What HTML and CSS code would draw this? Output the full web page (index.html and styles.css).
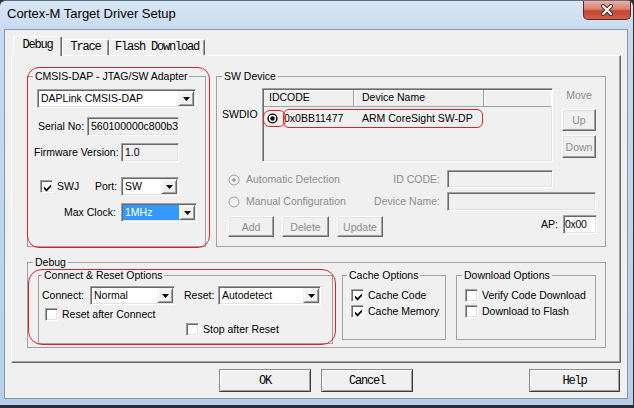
FILE: index.html
```html
<!DOCTYPE html>
<html>
<head>
<meta charset="utf-8">
<link rel="stylesheet" href="styles.css">
</head>
<body>
<div class="window">
  <div class="titlebar">
    <span class="title">Cortex-M Target Driver Setup</span>
    <div class="close">
      <svg width="14" height="12" viewBox="0 0 14 12"><path d="M3 2 L11 10 M11 2 L3 10" stroke="#4a2a2a" stroke-width="4" stroke-linecap="round"/><path d="M3 2 L11 10 M11 2 L3 10" stroke="#fff" stroke-width="2.2" stroke-linecap="round"/></svg>
    </div>
  </div>
  <div class="client">
    <div class="tabs">
      <div class="tab active w-debug">Debug</div>
      <div class="tab w-trace">Trace</div>
      <div class="tab w-flash">Flash Download</div>
    </div>
    <div class="panel">
      <div class="toprow">
        <fieldset class="group g-adapter">
          <legend>CMSIS-DAP - JTAG/SW Adapter</legend>
          <div class="combo c-dap"><span class="val">DAPLink CMSIS-DAP</span><span class="dbtn"><svg width="7" height="4" viewBox="0 0 7 4"><path d="M0 0H7L3.5 4Z" fill="#000"/></svg></span></div>
          <div class="row r-serial">
            <span class="lbl l-serial">Serial No:</span>
            <span class="edit ro e-serial">560100000c800b3</span>
          </div>
          <div class="row r-fw">
            <span class="lbl l-fw">Firmware Version:</span>
            <span class="edit ro e-fw">1.0</span>
          </div>
          <div class="row r-swj">
            <span class="chk c-swj"><svg width="9" height="9" viewBox="0 0 9 9"><path d="M1 3.5 L3.5 6 L8 1.5 V4 L3.5 8.5 L1 6 Z" fill="#000"/></svg></span>
            <span class="lbl l-swj">SWJ</span>
            <span class="lbl l-port">Port:</span>
            <div class="combo c-port"><span class="val">SW</span><span class="dbtn"><svg width="7" height="4" viewBox="0 0 7 4"><path d="M0 0H7L3.5 4Z" fill="#000"/></svg></span></div>
          </div>
          <div class="row r-clk">
            <span class="lbl l-clk">Max Clock:</span>
            <div class="combo c-clk"><span class="val sel">1MHz</span><span class="dbtn"><svg width="7" height="4" viewBox="0 0 7 4"><path d="M0 0H7L3.5 4Z" fill="#000"/></svg></span></div>
          </div>
        </fieldset>
        <fieldset class="group g-sw">
          <legend>SW Device</legend>
          <div class="row r-list">
            <span class="lbl l-swdio">SWDIO</span>
            <div class="list">
              <div class="lhead">
                <span class="col col1">IDCODE</span>
                <span class="col col2">Device Name</span>
                <span class="col col3"></span>
              </div>
              <div class="lrow">
                <span class="col col1"><svg class="rdot" width="11" height="11" viewBox="0 0 11 11"><circle cx="5.5" cy="5.5" r="4.4" fill="#fff" stroke="#000" stroke-width="1.4"/><circle cx="5.5" cy="5.5" r="2.2" fill="#000"/></svg>0x0BB11477</span>
                <span class="col col2">ARM CoreSight SW-DP</span>
              </div>
            </div>
            <div class="movecol">
              <span class="dis mv">Move</span>
              <span class="btn3d dis b-up">Up</span>
              <span class="btn3d dis b-down">Down</span>
            </div>
          </div>
          <div class="optgrid">
            <span class="radio dis"><svg width="12" height="12" viewBox="0 0 12 12"><circle cx="6" cy="6" r="5" fill="#f0f0f0" stroke="#a0a0a0"/><circle cx="6" cy="6" r="1.8" fill="#9a9a9a"/></svg>Automatic Detection</span>
            <span class="lbl dis rlbl">ID CODE:</span>
            <span class="edit ro e-id"></span>
            <span class="radio dis"><svg width="12" height="12" viewBox="0 0 12 12"><circle cx="6" cy="6" r="5" fill="#f0f0f0" stroke="#a0a0a0"/></svg>Manual Configuration</span>
            <span class="lbl dis rlbl">Device Name:</span>
            <span class="edit ro e-dev"></span>
          </div>
          <div class="row r-btns">
            <span class="btn3d dis b-add">Add</span>
            <span class="btn3d dis b-del">Delete</span>
            <span class="btn3d dis b-upd">Update</span>
            <span class="ap"><span class="lbl">AP:</span><span class="edit e-ap">0x00</span></span>
          </div>
        </fieldset>
      </div>
      <fieldset class="group g-debug">
        <legend>Debug</legend>
        <div class="subrow">
          <fieldset class="group g-cr">
            <legend>Connect &amp; Reset Options</legend>
            <div class="row r-conn">
              <span class="lbl l-conn">Connect:</span>
              <div class="combo c-conn"><span class="val">Normal</span><span class="dbtn"><svg width="7" height="4" viewBox="0 0 7 4"><path d="M0 0H7L3.5 4Z" fill="#000"/></svg></span></div>
              <span class="lbl l-reset">Reset:</span>
              <div class="combo c-reset"><span class="val">Autodetect</span><span class="dbtn"><svg width="7" height="4" viewBox="0 0 7 4"><path d="M0 0H7L3.5 4Z" fill="#000"/></svg></span></div>
            </div>
            <div class="row r-rac"><span class="chk"></span><span class="lbl ctext">Reset after Connect</span></div>
            <div class="row r-sar"><span class="chk"></span><span class="lbl ctext">Stop after Reset</span></div>
          </fieldset>
          <fieldset class="group g-cache">
            <legend>Cache Options</legend>
            <div class="row r-c1"><span class="chk"><svg width="9" height="9" viewBox="0 0 9 9"><path d="M1 3.5 L3.5 6 L8 1.5 V4 L3.5 8.5 L1 6 Z" fill="#000"/></svg></span><span class="lbl ctext">Cache Code</span></div>
            <div class="row r-c2"><span class="chk"><svg width="9" height="9" viewBox="0 0 9 9"><path d="M1 3.5 L3.5 6 L8 1.5 V4 L3.5 8.5 L1 6 Z" fill="#000"/></svg></span><span class="lbl ctext">Cache Memory</span></div>
          </fieldset>
          <fieldset class="group g-dl">
            <legend>Download Options</legend>
            <div class="row r-c1"><span class="chk"></span><span class="lbl ctext">Verify Code Download</span></div>
            <div class="row r-c2"><span class="chk"></span><span class="lbl ctext">Download to Flash</span></div>
          </fieldset>
        </div>
      </fieldset>
    </div>
    <div class="bottom">
      <span class="pbtn b-ok">OK</span>
      <span class="pbtn b-cancel">Cancel</span>
      <span class="pbtn b-help">Help</span>
    </div>
  </div>
  <div class="mark m-adapter"></div>
  <div class="mark m-cr"></div>
  <div class="mark m-radio"></div>
  <div class="mark m-row"></div>
</div>
</body>
</html>
```

FILE: styles.css
```css
* { box-sizing: border-box; }
html, body { margin: 0; padding: 0; }
body {
  width: 634px; height: 408px; overflow: hidden;
  background: #2b3036;
  font-family: "Liberation Sans", Arial, sans-serif;
  font-size: 10.5px; color: #000;
}
.window {
  position: relative;
  width: 633px; height: 405px;
  padding: 0 5px 6px 4px;
  background: linear-gradient(#d9e6f4 0, #c8dbf0 28px, #b7cfeb 100%);
  border-radius: 6px 6px 0 0;
  border-top: 1px solid #5d6e80;
  display: flex; flex-direction: column;
}
.titlebar {
  height: 28px;
  display: flex; justify-content: space-between; align-items: flex-start;
}
.title { font-size: 13px; line-height: 16px; margin: 5px 0 0 3px; color: #000; }
.close {
  width: 48px; height: 19px; margin-right: -3px;
  border: 1px solid #5a2a24; border-top: none;
  border-radius: 0 0 5px 5px;
  background: linear-gradient(#eab0a4 0, #d9806f 45%, #c64630 55%, #cf5e46 100%);
  display: flex; align-items: center; justify-content: center;
}
.client {
  width: 624px; height: 370px;
  background: #f0f0f0;
  border: 1px solid #8497ab;
  display: flex; flex-direction: column;
}
.tabs {
  display: flex; align-items: flex-end;
  height: 20px; margin: 6px 0 0 8px;
  position: relative; z-index: 1;
}
.tab {
  font-family: "Liberation Mono", monospace; font-size: 12px; letter-spacing: -1.2px;
  height: 16px; margin-bottom: 1px; line-height: 14px;
  text-align: center; background: #f0f0f0;
  border-top: 1px solid #fff; border-left: 1px solid #fff; border-right: 1px solid #696969;
  box-shadow: inset -1px 0 0 #a0a0a0;
  border-radius: 2px 2px 0 0;
}
.tab.active { height: 20px; margin-bottom: 0; line-height: 16px; }
.w-debug { width: 49px; }
.w-trace { width: 47px; }
.w-flash { width: 96px; }
.panel {
  margin: -1px 0 0 6px;
  width: 610px; height: 308px;
  border: 1px solid; border-color: #fff #696969 #696969 #fff;
  box-shadow: inset -1px -1px 0 #a0a0a0;
  padding: 14px 0 0 15px;
}
.toprow { display: flex; gap: 10px; }
.group { margin: 0; padding: 0; border: 1px solid #a0a0a0; min-width: 0; }
legend { padding: 0 2px; margin-left: 5px; line-height: 13px; height: 13px; }
.g-adapter { width: 179px; height: 177px; }
.g-sw { width: 390px; height: 177px; }
.row { display: flex; align-items: center; }
.lbl { white-space: nowrap; line-height: 13px; }
.dis { color: #8d8d8d; }

.combo {
  height: 19px; background: #fff;
  border: 1px solid; border-color: #a0a0a0 #fff #fff #a0a0a0;
  box-shadow: inset 1px 1px 0 #696969, inset -1px -1px 0 #e3e3e3;
  padding: 1px; display: flex;
}
.combo .val { flex: 1; padding-left: 2px; line-height: 15px; white-space: nowrap; overflow: hidden; }
.combo .val.sel { background: #3399ff; color: #fff; }
.dbtn {
  width: 16px; height: 15px; background: #f0f0f0;
  border: 1px solid; border-color: #f0f0f0 #696969 #696969 #f0f0f0;
  box-shadow: inset 1px 1px 0 #fff, inset -1px -1px 0 #a0a0a0;
  display: flex; align-items: center; justify-content: center;
}
.dbtn svg { display: block; }
.edit {
  height: 19px; background: #fff;
  border: 1px solid; border-color: #a0a0a0 #fff #fff #a0a0a0;
  box-shadow: inset 1px 1px 0 #696969, inset -1px -1px 0 #e3e3e3;
  padding-left: 3px; line-height: 17px; white-space: nowrap; overflow: hidden;
  display: block;
}
.edit.ro { background: #f0f0f0; }
.chk {
  width: 13px; height: 13px; background: #fff; flex: none;
  border: 1px solid; border-color: #a0a0a0 #fff #fff #a0a0a0;
  box-shadow: inset 1px 1px 0 #696969, inset -1px -1px 0 #e3e3e3;
  display: flex; align-items: center; justify-content: center;
}
.chk svg { display: block; margin: 1px 0 0 1px; }
.btn3d {
  display: flex; align-items: center; justify-content: center;
  background: #f0f0f0;
  border: 1px solid; border-color: #fff #696969 #696969 #fff;
  box-shadow: inset -1px -1px 0 #a0a0a0, inset 1px 1px 0 #e3e3e3;
}

/* adapter group */
.c-dap { width: 159px; margin: 6px 0 0 9px; }
.r-serial { margin-top: 9px; }
.l-serial { width: 49px; margin-left: 10px; }
.e-serial { width: 92px; }
.r-fw { margin-top: 7px; }
.l-fw { width: 87px; margin-left: 6px; }
.e-fw { width: 58px; }
.r-swj { margin-top: 15px; }
.c-swj { margin-left: 12px; }
.l-swj { width: 38px; margin-left: 4px; }
.l-port { width: 26px; }
.c-port { width: 58px; }
.r-clk { margin-top: 7px; }
.l-clk { width: 57px; margin-left: 36px; }
.c-clk { width: 76px; }

/* SW device */
.r-list { margin-top: 5px; align-items: flex-start; }
.l-swdio { width: 40px; margin: 20px 0 0 5px; }
.list {
  width: 291px; height: 74px; background: #f0f0f0;
  border: 1px solid; border-color: #a0a0a0 #fff #fff #a0a0a0;
  box-shadow: inset 1px 1px 0 #696969, inset -1px -1px 0 #e3e3e3;
  padding: 1px;
}
.lhead {
  display: flex; height: 17px;
  border-bottom: 1px solid #a0a0a0;
  box-shadow: inset 0 1px 0 #fff;
}
.lhead .col { line-height: 15px; border-right: 1px solid #a0a0a0; box-shadow: 1px 0 0 #fff; }
.col { padding-left: 5px; white-space: nowrap; }
.col1 { width: 90px; }
.col2 { width: 130px; padding-left: 8px; }
.col3 { flex: 1; }
.lhead .col3 { border-right: none; }
.lrow { display: flex; height: 18px; margin-top: 2px; align-items: center; }
.lrow .col1 { padding-left: 3px; display: flex; align-items: center; }
.rdot { display: block; margin-right: 6px; }
.movecol { width: 34px; margin-left: 9px; display: flex; flex-direction: column; align-items: stretch; }
.mv { text-align: center; line-height: 13px; margin-top: 1px; }
.b-up { height: 22px; margin-top: 7px; }
.b-down { height: 23px; margin-top: 4px; }
.optgrid {
  display: grid; margin: 8px 0 0 11px;
  grid-template-columns: 142px 70px 156px;
  grid-auto-rows: 19px; row-gap: 3px; align-items: center;
}
.radio { display: flex; align-items: center; white-space: nowrap; line-height: 13px; }
.radio svg { display: block; margin-right: 6px; }
.rlbl { text-align: right; }
.e-id { width: 106px; height: 18px; margin-left: 7px; align-self: start; }
.e-dev { width: 149px; margin-left: 7px; }
.r-btns { margin-top: 5px; align-items: flex-start; }
.b-add, .b-del, .b-upd { height: 21px; }
.b-add { width: 46px; margin-left: 11px; }
.b-del { width: 47px; margin-left: 8px; }
.b-upd { width: 46px; margin-left: 8px; }
.ap { margin: -1px 8px 0 auto; display: flex; align-items: center; }
.ap .lbl { margin-right: 5px; }
.e-ap { width: 34px; padding-left: 1px; letter-spacing: -0.3px; }

/* debug */
.g-debug { width: 579px; height: 92px; margin-top: 9px; }
.subrow { display: flex; align-items: flex-start; padding-left: 10px; }
.g-cr { width: 295px; height: 75px; }
.g-cr legend { margin-left: 3px; }
.g-cache { width: 104px; height: 71px; margin-left: 9px; }
.g-cache legend { margin-left: 4px; }
.g-dl { width: 140px; height: 71px; margin-left: 10px; }
.g-dl legend { margin-left: 5px; }
.r-conn { margin-top: 4px; }
.l-conn { width: 48px; margin-left: 3px; }
.c-conn { width: 85px; }
.l-reset { width: 34px; margin-left: 9px; }
.c-reset { width: 103px; }
.r-rac { margin-top: 3px; }
.r-rac .chk { margin-left: 6px; }
.r-sar { margin-top: 2px; }
.r-sar .chk { margin-left: 147px; }
.ctext { margin-left: 4px; }
.r-c1 { margin-top: 7px; }
.r-c2 { margin-top: 3px; }
.r-c1 .chk, .r-c2 .chk { margin-left: 8px; }

/* bottom buttons */
.bottom { display: flex; margin-top: 6px; }
.pbtn {
  width: 92px; height: 23px;
  display: flex; align-items: center; justify-content: center;
  font-family: "Liberation Mono", monospace; font-size: 12px; letter-spacing: -1.2px;
  background: #f0f0f0;
  border: 1px solid; border-color: #8a8a8a #3c3c3c #3c3c3c #8a8a8a;
  box-shadow: inset 1px 1px 0 #fff, inset -1px -1px 0 #a0a0a0;
}
.b-ok { margin-left: 214px; }
.b-cancel { margin-left: 10px; }
.b-help { margin-left: 116px; width: 91px; }

/* red annotations */
.mark { position: absolute; border: 1px solid #e3202a; }
.m-adapter { left: 27px; top: 66px; width: 183px; height: 181px; border-radius: 12px; }
.m-cr { left: 28px; top: 268px; width: 308px; height: 76px; border-radius: 14px; }
.m-radio { left: 263px; top: 109px; width: 23px; height: 17px; border-radius: 7px; }
.m-row { left: 283px; top: 108px; width: 200px; height: 19px; border-radius: 6px; }
```
